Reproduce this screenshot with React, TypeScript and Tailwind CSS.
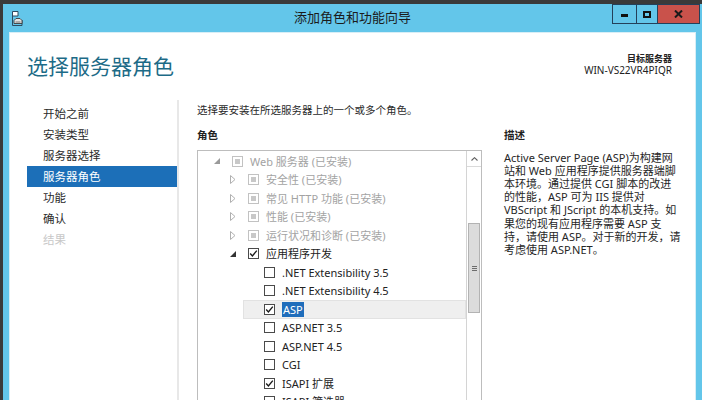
import type { JSX } from "react";

type Check = "installed" | "checked" | "unchecked";

interface TreeRow {
  level: number;
  label: string;
  expander?: "open" | "closed";
  check: Check;
  muted?: boolean;
  selected?: boolean;
}

const navItems = [
  "开始之前",
  "安装类型",
  "服务器选择",
  "服务器角色",
  "功能",
  "确认",
  "结果",
];

const rows: TreeRow[] = [
  { level: 0, label: "Web 服务器 (已安装)", expander: "open", check: "installed", muted: true },
  { level: 1, label: "安全性 (已安装)", expander: "closed", check: "installed", muted: true },
  { level: 1, label: "常见 HTTP 功能 (已安装)", expander: "closed", check: "installed", muted: true },
  { level: 1, label: "性能 (已安装)", expander: "closed", check: "installed", muted: true },
  { level: 1, label: "运行状况和诊断 (已安装)", expander: "closed", check: "installed", muted: true },
  { level: 1, label: "应用程序开发", expander: "open", check: "checked" },
  { level: 2, label: ".NET Extensibility 3.5", check: "unchecked" },
  { level: 2, label: ".NET Extensibility 4.5", check: "unchecked" },
  { level: 2, label: "ASP", check: "checked", selected: true },
  { level: 2, label: "ASP.NET 3.5", check: "unchecked" },
  { level: 2, label: "ASP.NET 4.5", check: "unchecked" },
  { level: 2, label: "CGI", check: "unchecked" },
  { level: 2, label: "ISAPI 扩展", check: "checked" },
  { level: 2, label: "ISAPI 筛选器", check: "unchecked" },
];

const description = [
  "Active Server Page (ASP)为构建网",
  "站和 Web 应用程序提供服务器端脚",
  "本环境。通过提供 CGI 脚本的改进",
  "的性能，ASP 可为 IIS 提供对",
  "VBScript 和 JScript 的本机支持。如",
  "果您的现有应用程序需要 ASP 支",
  "持，请使用 ASP。对于新的开发，请",
  "考虑使用 ASP.NET。",
];

function Expander({ kind, muted }: { kind?: "open" | "closed"; muted?: boolean }): JSX.Element {
  return (
    <span className="flex w-[12px] shrink-0 items-center justify-center">
      {kind === "open" && (
        <svg width="6" height="6" viewBox="0 0 6 6">
          <polygon points="6,0 6,6 0,6" fill={muted ? "#9a9a9a" : "#333"} />
        </svg>
      )}
      {kind === "closed" && (
        <svg width="6" height="9" viewBox="0 0 6 9">
          <polygon points="0.5,0.5 5,4.5 0.5,8.5" fill="none" stroke="#b0b0b0" strokeWidth="1" />
        </svg>
      )}
    </span>
  );
}

function CheckBox({ check }: { check: Check }): JSX.Element {
  if (check === "installed") {
    return (
      <span className="ml-[9px] flex h-[11px] w-[11px] shrink-0 items-center justify-center border border-[#c2c2c2] bg-white">
        <span className="h-[5px] w-[5px] bg-[#c8c8c8]" />
      </span>
    );
  }
  return (
    <span className="ml-[9px] flex h-[11px] w-[11px] shrink-0 items-center justify-center border border-[#4a4a4a] bg-white">
      {check === "checked" && (
        <svg width="9" height="9" viewBox="0 0 9 9">
          <polyline points="1.2,4.6 3.4,6.9 7.8,1.6" fill="none" stroke="#1a1a1a" strokeWidth="1.4" />
        </svg>
      )}
    </span>
  );
}

function TreeLine({ row }: { row: TreeRow }): JSX.Element {
  const indent = ["pl-[13px]", "pl-[29px]", "pl-[45px]"][row.level];
  return (
    <div className={`flex h-[18.5px] ${indent}`}>
      <div
        className={`flex flex-1 items-center ${
          row.selected ? "bg-[#efefef] shadow-[inset_0_0_0_1px_#e2e2e2]" : ""
        }`}
      >
        <Expander kind={row.expander} muted={row.muted} />
        <CheckBox check={row.check} />
        <span
          className={`ml-[7px] whitespace-nowrap text-[11px] leading-[15px] ${
            row.muted ? "text-[#a3a3a3]" : "text-[#222]"
          } ${row.selected ? "bg-[#1f6dbb] px-[1px] text-white" : ""}`}
        >
          {row.label}
        </span>
      </div>
    </div>
  );
}

function WindowIcon(): JSX.Element {
  return (
    <svg width="12" height="15" viewBox="0 0 12 15">
      <path d="M1.5 0.5 H7 V5 H1.5 Z" fill="#fff" stroke="#2d4a60" strokeWidth="1" />
      <path d="M1.5 5 V14.5 H11 V9" fill="none" stroke="#2d4a60" strokeWidth="1" />
      <path d="M3 9.5 L5 7.5 H9 L11 9.5 V12.5 H3 Z" fill="#e4e4e4" stroke="#3b3b3b" strokeWidth="0.9" />
      <path d="M4.5 11 H9.5" stroke="#555" strokeWidth="0.8" />
    </svg>
  );
}

export default function App(): JSX.Element {
  return (
    <div className="h-[400px] w-[702px] overflow-hidden bg-[#3a3a3a] pt-[4px] font-['Noto_Sans','Noto_Sans_CJK_SC',sans-serif]">
      <div className="ml-[3px] flex h-full flex-col bg-[#63c6ea]">
        {/* title bar */}
        <div className="grid h-[28px] shrink-0 grid-cols-[1fr_auto_1fr]">
          <div className="flex items-center pl-[8px] pt-[1px]">
            <WindowIcon />
          </div>
          <div className="flex items-center pb-[1px] text-[13px] text-[#1b1b1b]">添加角色和功能向导</div>
          <div className="flex justify-end pr-[2px]">
            <div className="flex h-[20px] border border-[#24405a]">
              <div className="flex w-[24px] items-center justify-center border-r border-[#24405a]">
                <span className="mt-[2px] h-[3px] w-[7px] bg-[#111]" />
              </div>
              <div className="flex w-[21px] items-center justify-center border-r border-[#24405a]">
                <span className="h-[7px] w-[8px] border-2 border-[#111]" />
              </div>
              <div className="flex w-[41px] items-center justify-center bg-[#c9524b]">
                <svg width="9" height="8" viewBox="0 0 9 8">
                  <path d="M1 0.5 L8 7.5 M8 0.5 L1 7.5" stroke="#1a1a1a" strokeWidth="2" />
                </svg>
              </div>
            </div>
          </div>
        </div>

        {/* content */}
        <div className="mr-[6px] ml-[6px] flex-1 bg-white shadow-[inset_0_0_0_1px_#d8eef6]">
          <div className="flex items-start justify-between pt-[20px] pl-[18px] pr-[24px]">
            <h1 className="text-[21px] leading-[28px] font-normal text-[#1d6b87]">选择服务器角色</h1>
            <div className="mt-[1px] text-right leading-[11.5px] text-[#222]">
              <div className="text-[9px] font-semibold">目标服务器</div>
              <div className="text-[10px]">WIN-VS22VR4PIQR</div>
            </div>
          </div>

          <div className="mt-[20px] flex">
            <nav className="h-[300px] w-[170px] shrink-0 border-r-2 border-[#e8e8e8] pt-[2.5px] pl-[18px]">
              {navItems.map((item, i) => (
                <div
                  key={item}
                  className={`h-[21px] pl-[16px] text-[11.5px] leading-[21px] ${
                    i === 3
                      ? "bg-[#1c6fb8] text-white"
                      : i === 6
                        ? "text-[#c8c8c8]"
                        : "text-[#2a2a2a]"
                  }`}
                >
                  {item}
                </div>
              ))}
            </nav>

            <div className="flex-1 pt-[2px] pl-[18px]">
              <p className="text-[10.5px] leading-[16px] text-[#2a2a2a]">
                选择要安装在所选服务器上的一个或多个角色。
              </p>
              <div className="mt-[9px] flex">
                <div className="w-[285px] shrink-0">
                  <div className="text-[10.5px] leading-[16px] font-bold text-[#222]">角色</div>
                  <div className="mt-[7px] flex h-[260px] border border-[#bdbdbd]">
                    <div className="flex-1 overflow-hidden pt-[1px]">
                      {rows.map((row) => (
                        <TreeLine key={row.label} row={row} />
                      ))}
                    </div>
                    <div className="flex w-[15px] shrink-0 flex-col border-l border-[#d4d4d4] bg-white">
                      <div className="flex h-[16px] items-center justify-center border-b border-[#dadada]">
                        <svg width="7" height="4" viewBox="0 0 7 4">
                          <polyline points="0.5,3.5 3.5,0.7 6.5,3.5" fill="none" stroke="#606060" strokeWidth="1.1" />
                        </svg>
                      </div>
                      <div className="mx-[1px] mt-[56px] flex h-[90px] flex-col items-center justify-center gap-[1px] border border-[#b3b3b3] bg-[#dcdcdc]">
                        <span className="h-[1px] w-[5px] bg-[#6d6d6d]" />
                        <span className="h-[1px] w-[5px] bg-[#6d6d6d]" />
                        <span className="h-[1px] w-[5px] bg-[#6d6d6d]" />
                      </div>
                    </div>
                  </div>
                </div>
                <div className="ml-[22px]">
                  <div className="text-[10.5px] leading-[16px] font-bold text-[#222]">描述</div>
                  <div className="mt-[7.5px] text-[11px] leading-[13.2px] text-[#262626]">
                    {description.map((line) => (
                      <div key={line} className="whitespace-nowrap">
                        {line}
                      </div>
                    ))}
                  </div>
                </div>
              </div>
            </div>
          </div>
        </div>
      </div>
    </div>
  );
}
